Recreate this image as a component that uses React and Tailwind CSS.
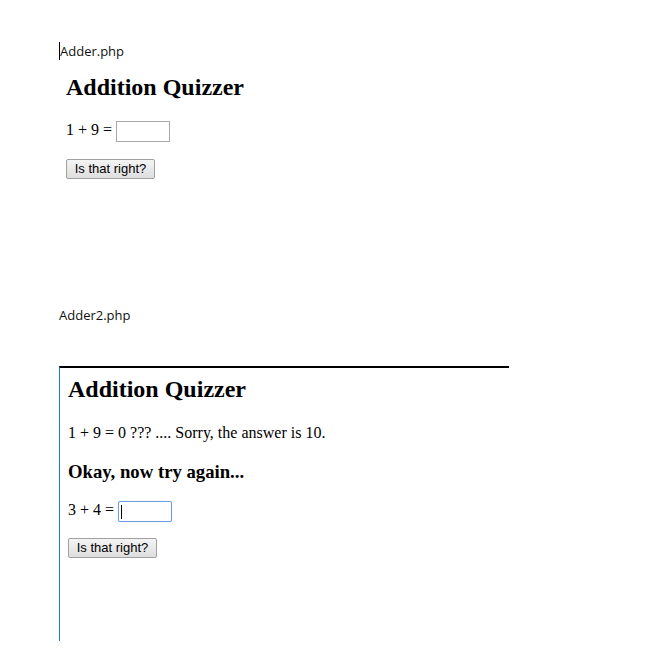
import React from 'react';

const serif = "font-['Liberation_Serif','Times_New_Roman',serif]";
const caption = "font-['Open_Sans','Noto_Sans',sans-serif] text-[13px] leading-[18px] text-[#111]";

function QuizButton() {
  return (
    <button className="h-[20px] w-[89px] rounded-[2px] border border-[#a0a0a0] bg-gradient-to-b from-[#f4f4f4] to-[#dedede] font-['Liberation_Sans',Arial,sans-serif] text-[13px] leading-[18px] text-black">
      Is that right?
    </button>
  );
}

function AnswerRow({ question, focused }) {
  return (
    <div className="flex items-end">
      <span className={`${serif} mb-[3px] text-[16px] leading-[18px] text-black`}>{question}&nbsp;</span>
      {focused ? (
        <div className="relative h-[21px] w-[54px] rounded-[2px] border border-[#6f9fe0] bg-white shadow-[0_0_1px_#9cc0f0]">
          <span className="absolute left-[2px] top-[3px] h-[14px] w-px bg-black" />
        </div>
      ) : (
        <div className="h-[21px] w-[54px] border border-[#a9a9a9] bg-white" />
      )}
    </div>
  );
}

export default function App() {
  return (
    <div className="min-h-[656px] w-[655px] bg-white pl-[59px]">
      {/* Adder.php */}
      <div className={`${caption} pt-[42px]`}>
        <span className="border-l border-black">Adder.php</span>
      </div>
      <div className="pl-[7px]">
        <h1 className={`${serif} mt-[13px] text-[24px] font-bold leading-[28px] text-black`}>Addition Quizzer</h1>
        <div className="mt-[20px]">
          <AnswerRow question="1 + 9 =" />
        </div>
        <div className="mt-[13px]">
          <QuizButton />
        </div>
      </div>

      {/* Adder2.php */}
      <div className={`${caption} mt-[127px]`}>Adder2.php</div>
      <div className="mt-[42px] h-[275px] w-[450px] border-l border-t-[2px] border-l-[#1a78d8] border-t-black pl-[8px] pt-[7px]">
        <h1 className={`${serif} text-[24px] font-bold leading-[28px] text-black`}>Addition Quizzer</h1>
        <p className={`${serif} mt-[21px] text-[16px] leading-[18px] text-black`}>
          1 + 9 = 0 ??? .... Sorry, the answer is 10.
        </p>
        <h3 className={`${serif} mt-[19px] text-[18.72px] font-bold leading-[22px] text-black`}>Okay, now try again...</h3>
        <div className="mt-[18px]">
          <AnswerRow question="3 + 4 =" focused />
        </div>
        <div className="mt-[12px]">
          <QuizButton />
        </div>
      </div>
    </div>
  );
}
